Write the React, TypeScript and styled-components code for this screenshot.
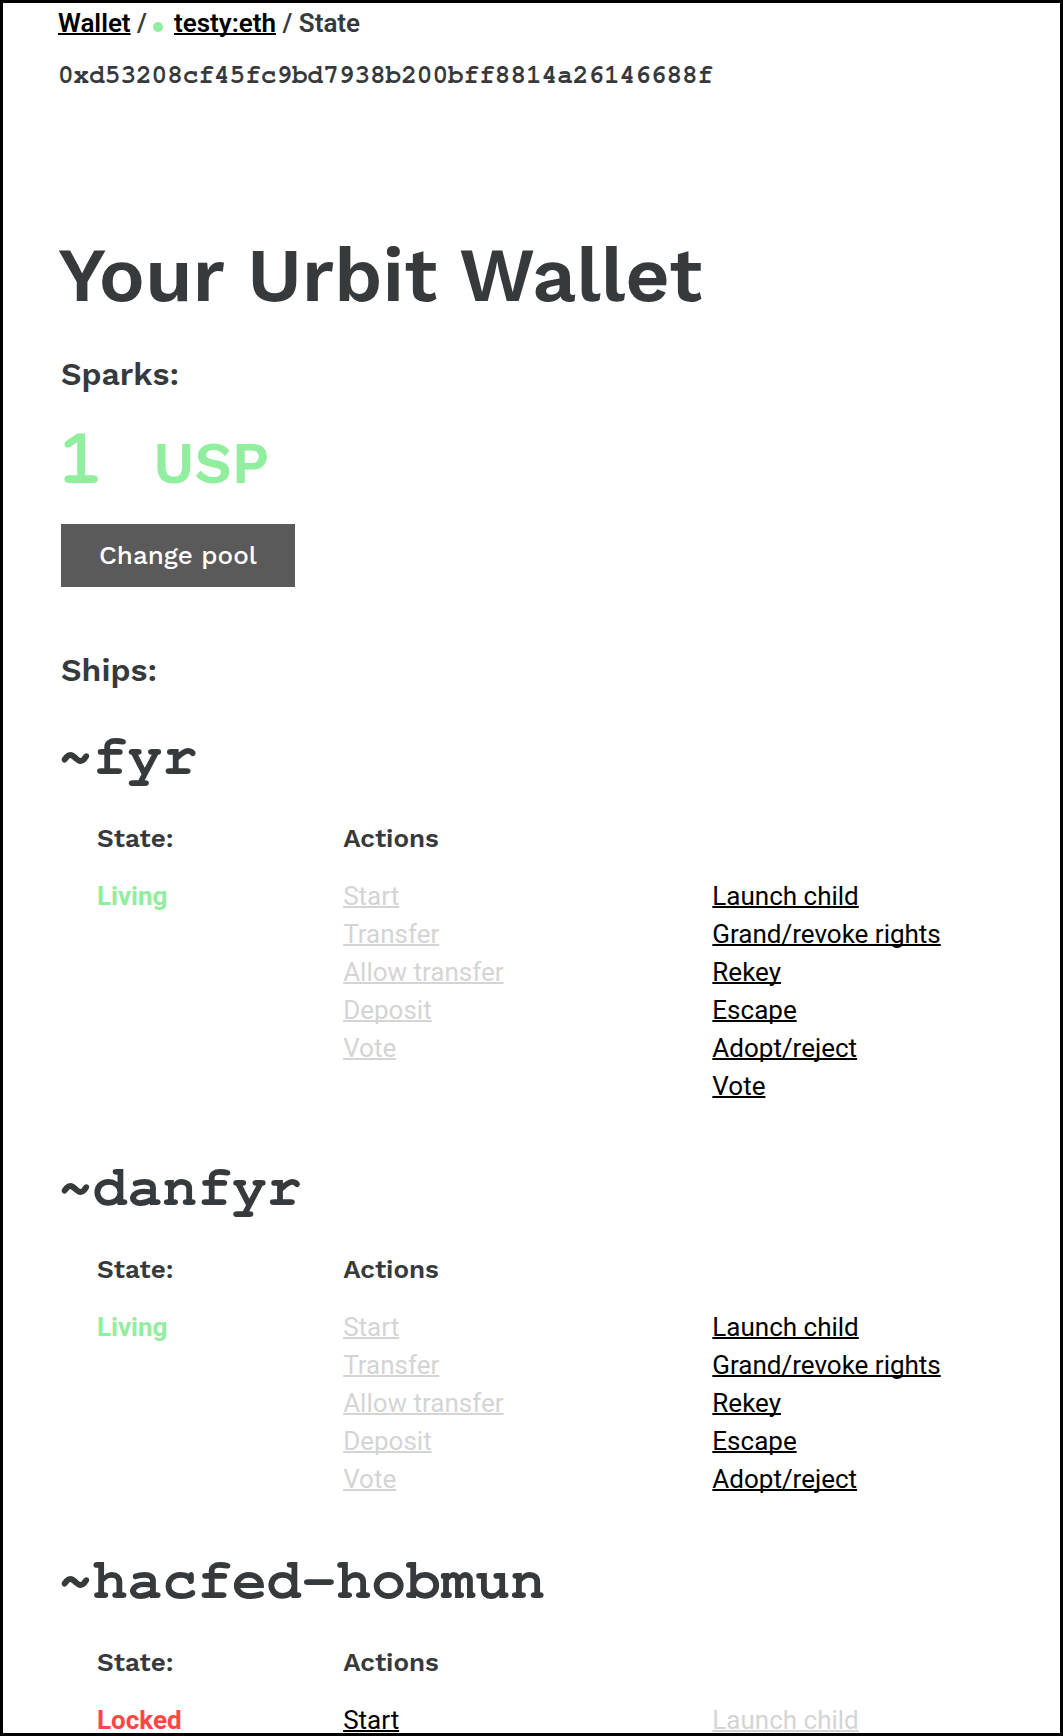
import React from "react";
import styled, { createGlobalStyle } from "styled-components";

const sans = '"Work Sans", "Open Sans", "Noto Sans", sans-serif';
const body = 'Roboto, "Noto Sans", sans-serif';
const mono = 'FreeMono, "Courier Prime", "Liberation Mono", monospace';

const ink = "#373a3c";
const green = "#90ee9e";
const red = "#ff4545";
const muted = "#d4d4d4";

const GlobalStyle = createGlobalStyle`
  *, *::before, *::after {
    box-sizing: border-box;
  }

  body {
    margin: 0;
    background: #fff;
    color: ${ink};
    font-family: ${body};
    font-size: 26px;
    line-height: 38px;
  }

  h1, h2, h3, h4, p, ul {
    margin: 0;
    padding: 0;
  }
`;

const Frame = styled.div`
  height: 100vh;
  border: 3px solid #000;
  overflow: hidden;
`;

const Header = styled.header`
  padding: 0 40px 0 55px;
`;

const Breadcrumb = styled.nav`
  font-weight: 600;
  line-height: 40px;
`;

const StatusDot = styled.span`
  display: inline-block;
  width: 10px;
  height: 10px;
  margin-right: 4px;
  border-radius: 50%;
  background: ${green};
`;

const Address = styled.p`
  margin-top: 13px;
  font-family: ${mono};
  font-weight: 700;
  overflow-wrap: anywhere;
`;

const TextLink = styled.a<{ $muted?: boolean }>`
  color: ${(p) => (p.$muted ? muted : "#000")};
  text-decoration: underline;
  text-decoration-skip-ink: none;
  text-decoration-thickness: 2px;
`;

const Main = styled.main`
  padding: 137px 40px 0 55px;
`;

const Title = styled.h1`
  font-family: ${sans};
  font-weight: 600;
  font-size: 77px;
  line-height: 88px;
`;

const SectionTitle = styled.h2`
  padding-left: 3px;
  font-family: ${sans};
  font-weight: 600;
  font-size: 32px;
  line-height: 40px;
`;

const Sparks = styled.section`
  padding: 35px 0 63px;
`;

const Balance = styled.p`
  display: flex;
  align-items: baseline;
  gap: 49px;
  margin: 26px 0 21px;
  color: ${green};
  font-family: ${sans};
  font-weight: 600;
  font-size: 58px;
  line-height: 80px;
`;

const Amount = styled.span`
  font-family: ${mono};
  font-weight: 700;
  font-size: 77px;
`;

const Button = styled.button`
  display: block;
  margin-left: 3px;
  padding: 12px 38px;
  border: 0;
  background: #5a5a5a;
  color: #fff;
  font-family: ${sans};
  font-weight: 500;
  font-size: 26px;
  line-height: 39px;
  cursor: pointer;
`;

const ShipList = styled.div`
  padding-top: 31px;
`;

const Ship = styled.article`
  padding-bottom: 47px;
`;

const ShipName = styled.h3`
  margin: 0 0 26px;
  font-family: ${mono};
  font-weight: 700;
  font-size: 58px;
  line-height: 72px;
`;

const ShipDetails = styled.div`
  display: grid;
  grid-template-columns: 4fr 6fr 5fr;
  row-gap: 20px;
  padding-left: 39px;
`;

const Label = styled.h4<{ $span?: number }>`
  grid-column: span ${(p) => p.$span ?? 1};
  font-family: ${sans};
  font-weight: 600;
  font-size: 26px;
  line-height: 38px;
`;

const State = styled.p<{ $locked: boolean }>`
  color: ${(p) => (p.$locked ? red : green)};
  font-weight: 700;
`;

const ActionList = styled.ul`
  list-style: none;
`;

type ShipData = {
  name: string;
  locked: boolean;
  owner: string[];
  pilot: string[];
};

const ownerActions = ["Start", "Transfer", "Allow transfer", "Deposit", "Vote"];
const pilotActions = ["Launch child", "Grand/revoke rights", "Rekey", "Escape", "Adopt/reject"];

const ships: ShipData[] = [
  { name: "~fyr", locked: false, owner: ownerActions, pilot: [...pilotActions, "Vote"] },
  { name: "~danfyr", locked: false, owner: ownerActions, pilot: pilotActions },
  { name: "~hacfed-hobmun", locked: true, owner: ["Start"], pilot: ["Launch child"] },
];

function Actions({ items, disabled }: { items: string[]; disabled: boolean }) {
  return (
    <ActionList>
      {items.map((item) => (
        <li key={item}>
          <TextLink href="#" $muted={disabled} aria-disabled={disabled}>
            {item}
          </TextLink>
        </li>
      ))}
    </ActionList>
  );
}

export default function App() {
  return (
    <Frame>
      <GlobalStyle />
      <Header>
        <Breadcrumb>
          <TextLink href="#">Wallet</TextLink> / <StatusDot /> <TextLink href="#">testy:eth</TextLink> / State
        </Breadcrumb>
        <Address>0xd53208cf45fc9bd7938b200bff8814a26146688f</Address>
      </Header>
      <Main>
        <Title>Your Urbit Wallet</Title>
        <Sparks>
          <SectionTitle>Sparks:</SectionTitle>
          <Balance>
            <Amount>1</Amount>
            <span>USP</span>
          </Balance>
          <Button type="button">Change pool</Button>
        </Sparks>
        <section>
          <SectionTitle>Ships:</SectionTitle>
          <ShipList>
            {ships.map((ship) => (
              <Ship key={ship.name}>
                <ShipName>{ship.name}</ShipName>
                <ShipDetails>
                  <Label>State:</Label>
                  <Label $span={2}>Actions</Label>
                  <State $locked={ship.locked}>{ship.locked ? "Locked" : "Living"}</State>
                  <Actions items={ship.owner} disabled={!ship.locked} />
                  <Actions items={ship.pilot} disabled={ship.locked} />
                </ShipDetails>
              </Ship>
            ))}
          </ShipList>
        </section>
      </Main>
    </Frame>
  );
}
